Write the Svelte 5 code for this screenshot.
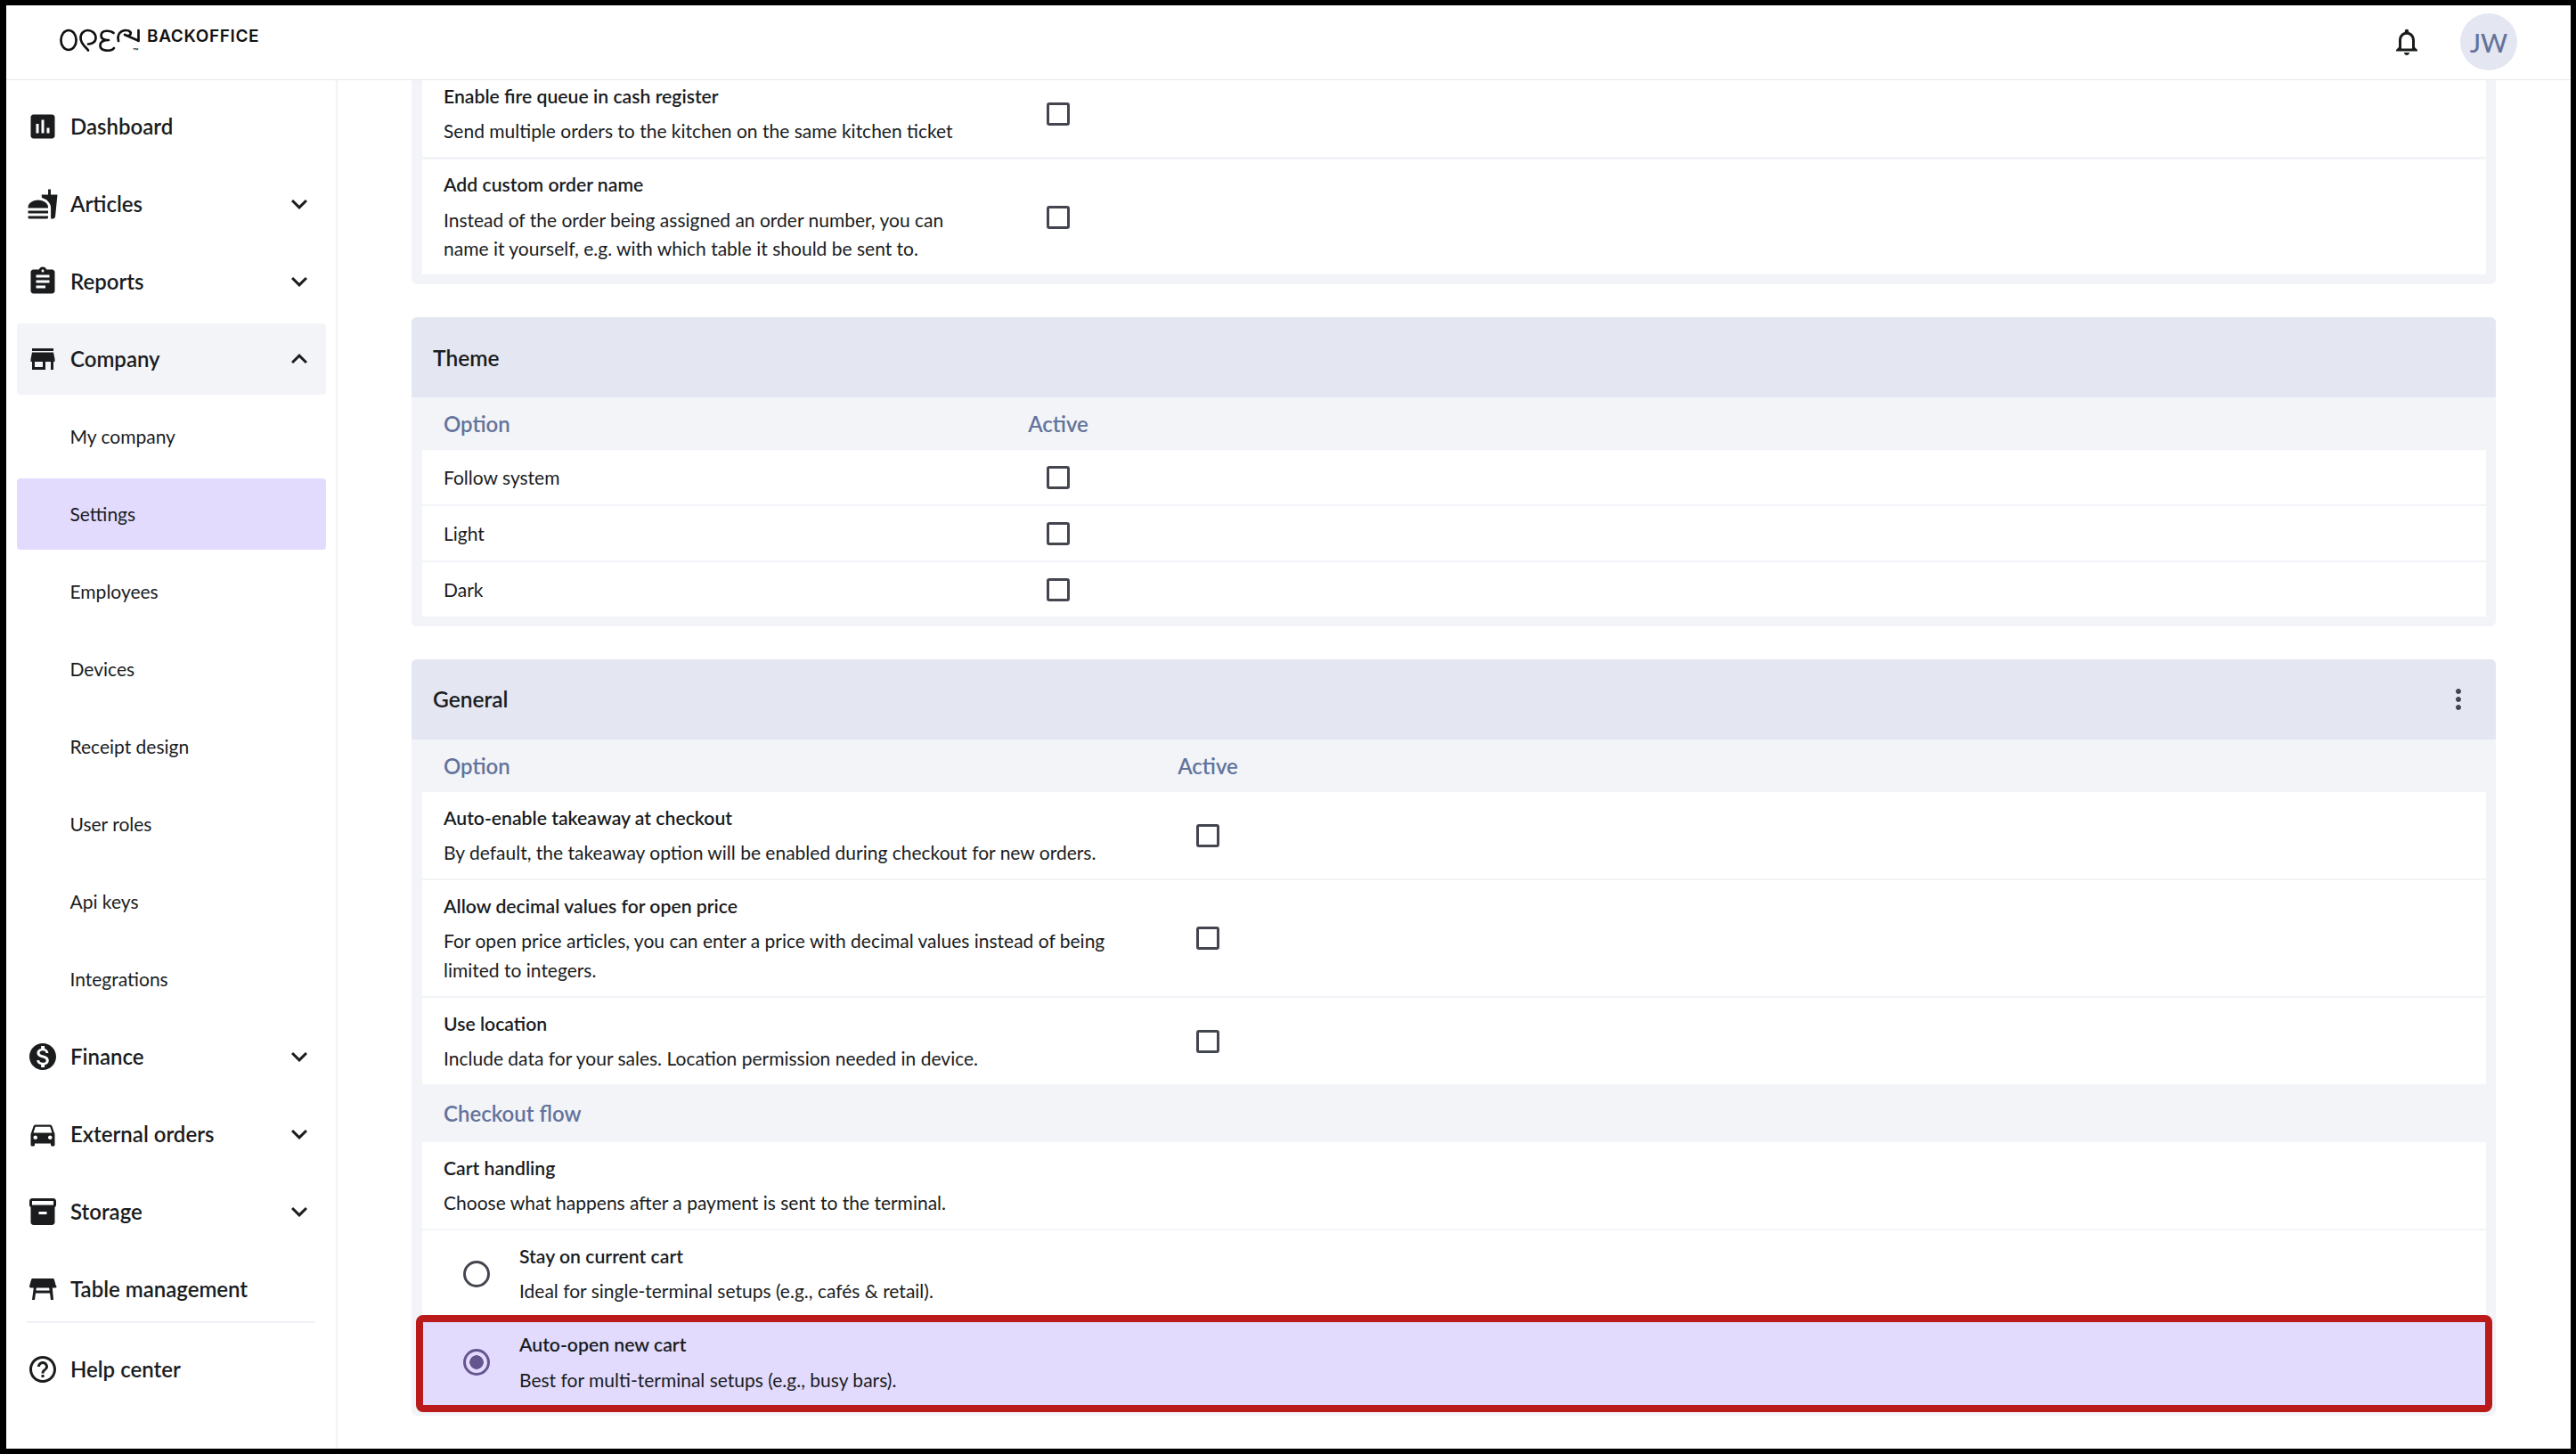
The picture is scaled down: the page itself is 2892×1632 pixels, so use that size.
<script>
  const I = {
    dash: 'M19 3H5c-1.1 0-2 .9-2 2v14c0 1.1.9 2 2 2h14c1.1 0 2-.9 2-2V5c0-1.1-.9-2-2-2zM9 17H7v-7h2v7zm4 0h-2V7h2v10zm4 0h-2v-4h2v4z',
    food: 'M18.06 22.99h1.66c.84 0 1.53-.64 1.63-1.46L23 5.05h-5V1h-1.97v4.05h-4.97l.3 2.34c1.71.47 3.31 1.32 4.27 2.26 1.44 1.42 2.43 2.89 2.43 5.29v8.05zM1 21.99V21h15.03v.99c0 .55-.45 1-1.01 1H2.01c-.56 0-1.01-.45-1.01-1zm15.03-7c.5-4-4.5-6-7.5-6s-8 2-7.5 6h15zM1.02 17h15v2h-15z',
    report: 'M19 3h-4.18C14.4 1.84 13.3 1 12 1c-1.3 0-2.4.84-2.82 2H5c-1.1 0-2 .9-2 2v14c0 1.1.9 2 2 2h14c1.1 0 2-.9 2-2V5c0-1.1-.9-2-2-2zm-7 0c.55 0 1 .45 1 1s-.45 1-1 1-1-.45-1-1 .45-1 1-1zm2 14H7v-2h7v2zm3-4H7v-2h10v2zm0-4H7V7h10v2z',
    store: 'M20 4H4v2h16V4zm1 10v-2l-1-5H4l-1 5v2h1v6h10v-6h4v6h2v-6h1zm-9 4H6v-4h6v4z',
    money: 'M12 2C6.48 2 2 6.48 2 12s4.48 10 10 10 10-4.48 10-10S17.52 2 12 2zm1.41 16.09V20h-2.67v-1.93c-1.71-.36-3.16-1.46-3.27-3.4h1.96c.1 1.05.82 1.87 2.65 1.87 1.96 0 2.4-.98 2.4-1.59 0-.83-.44-1.61-2.67-2.14-2.48-.6-4.18-1.62-4.18-3.67 0-1.72 1.39-2.84 3.11-3.21V4h2.67v1.95c1.86.45 2.79 1.86 2.85 3.39H14.3c-.05-1.11-.64-1.87-2.22-1.87-1.5 0-2.4.68-2.4 1.64 0 .84.65 1.39 2.67 1.91s4.18 1.39 4.18 3.91c-.01 1.83-1.38 2.83-3.12 3.16z',
    car: 'M18.92 6.01C18.72 5.42 18.16 5 17.5 5h-11c-.66 0-1.21.42-1.42 1.01L3 12v8c0 .55.45 1 1 1h1c.55 0 1-.45 1-1v-1h12v1c0 .55.45 1 1 1h1c.55 0 1-.45 1-1v-8l-2.08-5.99zM6.5 16c-.83 0-1.5-.67-1.5-1.5S5.67 13 6.5 13s1.5.67 1.5 1.5S7.33 16 6.5 16zm11 0c-.83 0-1.5-.67-1.5-1.5s.67-1.5 1.5-1.5 1.5.67 1.5 1.5-.67 1.5-1.5 1.5zM5 11l1.5-4.5h11L19 11H5z',
    box: 'M20 2H4c-1 0-2 .9-2 2v3.01c0 .72.43 1.34 1 1.69V20c0 1.1 1.1 2 2 2h14c.9 0 2-.9 2-2V8.7c.57-.35 1-.97 1-1.69V4c0-1.1-1-2-2-2zm-5 12H9v-2h6v2zm5-7H4V4h16v3z',
    table: 'M21.96 9.73l-1.43-5c-.12-.43-.51-.73-.96-.73H4.43c-.45 0-.84.3-.96.73l-1.43 5c-.18.63.3 1.27.96 1.27h2.2L4 20h2l.67-5h10.67l.66 5h2l-.77-9h2.2c.66 0 1.14-.64.96-1.27zM6.93 13l.27-2h9.6l.27 2H6.93z',
    help: 'M11 18h2v-2h-2v2zm1-16C6.48 2 2 6.48 2 12s4.48 10 10 10 10-4.48 10-10S17.52 2 12 2zm0 18c-4.41 0-8-3.59-8-8s3.59-8 8-8 8 3.59 8 8-3.59 8-8 8zm0-14c-2.21 0-4 1.79-4 4h2c0-1.1.9-2 2-2s2 .9 2 2c0 2-3 1.75-3 5h2c0-2.25 3-2.5 3-5 0-2.21-1.79-4-4-4z',
    down: 'M16.59 8.59L12 13.17 7.41 8.59 6 10l6 6 6-6z',
    up: 'M12 8l-6 6 1.41 1.41L12 10.83l4.59 4.58L18 14z',
    bell: 'M12 22c1.1 0 2-.9 2-2h-4c0 1.1.9 2 2 2zm6-6v-5c0-3.07-1.63-5.64-4.5-6.32V4c0-.83-.67-1.5-1.5-1.5s-1.5.67-1.5 1.5v.68C7.64 5.36 6 7.92 6 11v5l-2 2v1h16v-1l-2-2zm-2 1H8v-6c0-2.48 1.51-4.5 4-4.5s4 2.02 4 4.5v6z',
    more: 'M12 8c1.1 0 2-.9 2-2s-.9-2-2-2-2 .9-2 2 .9 2 2 2zm0 2c-1.1 0-2 .9-2 2s.9 2 2 2 2-.9 2-2-.9-2-2-2zm0 6c-1.1 0-2 .9-2 2s.9 2 2 2 2-.9 2-2-.9-2-2-2z'
  };
  const nav = [
    { label: 'Dashboard', icon: I.dash },
    { label: 'Articles', icon: I.food, chev: I.down },
    { label: 'Reports', icon: I.report, chev: I.down },
    { label: 'Company', icon: I.store, chev: I.up, open: true },
    { label: 'My company', sub: true },
    { label: 'Settings', sub: true, active: true },
    { label: 'Employees', sub: true },
    { label: 'Devices', sub: true },
    { label: 'Receipt design', sub: true },
    { label: 'User roles', sub: true },
    { label: 'Api keys', sub: true },
    { label: 'Integrations', sub: true },
    { label: 'Finance', icon: I.money, chev: I.down },
    { label: 'External orders', icon: I.car, chev: I.down },
    { label: 'Storage', icon: I.box, chev: I.down },
    { label: 'Table management', icon: I.table }
  ];
  const firstRows = [
    { title: 'Enable fire queue in cash register', desc: 'Send multiple orders to the kitchen on the same kitchen ticket' },
    { title: 'Add custom order name', desc: 'Instead of the order being assigned an order number, you can name it yourself, e.g. with which table it should be sent to.' }
  ];
  const themeRows = ['Follow system', 'Light', 'Dark'];
  const generalRows = [
    { title: 'Auto-enable takeaway at checkout', desc: 'By default, the takeaway option will be enabled during checkout for new orders.' },
    { title: 'Allow decimal values for open price', desc: 'For open price articles, you can enter a price with decimal values instead of being limited to integers.' },
    { title: 'Use location', desc: 'Include data for your sales. Location permission needed in device.' }
  ];
</script>

{#snippet icon(d, cls = 'ic')}
  <svg class={cls} viewBox="0 0 24 24" aria-hidden="true"><path {d} /></svg>
{/snippet}

{#snippet optionText(title, desc)}
  <div class="title">{title}</div>
  <div class="desc">{desc}</div>
{/snippet}

<div class="frame">
  <div class="app">
    <header class="top">
      <svg class="logo" viewBox="64 30 100 35" aria-label="Open logo">
        <g fill="none" stroke="#111" stroke-width="2.7" stroke-linecap="round" stroke-linejoin="round">
          <ellipse cx="77" cy="46" rx="8.6" ry="11" />
          <path d="M99 57.5C97 54 90.5 51 90.5 43.5C90.5 38 94.5 35 98.5 35C103 35 107.5 38 107.5 43.5C107.5 48 103.5 50.5 99 50.5" />
          <path d="M127.5 38C125 35.5 113.5 33.5 113.5 41C113.5 44.5 117 46 122 46C116 46 112.5 47.5 112.5 52C112.5 59 125 59 128 55" />
          <path d="M133 47C131 39 136 35 141 35C146 35 148 38 146 40C145 41.5 142 41 140 40L155 46.5" />
          <path d="M155.5 35V47" />
        </g>
        <text x="149" y="60" class="tm">™</text>
      </svg>
      <span class="brand">BACKOFFICE</span>
      <span class="spacer"></span>
      {@render icon(I.bell, 'ic bell')}
      <div class="avatar">JW</div>
    </header>

    <div class="body">
      <aside class="side">
        <nav class="nav">
          {#each nav as n}
            <div class="item" class:sub={n.sub} class:open={n.open} class:active={n.active}>
              {#if n.icon}{@render icon(n.icon)}{/if}
              <span class="lbl">{n.label}</span>
              {#if n.chev}{@render icon(n.chev, 'ic chev')}{/if}
            </div>
          {/each}
          <div class="divider"></div>
          <div class="item">
            {@render icon(I.help)}
            <span class="lbl">Help center</span>
          </div>
        </nav>
      </aside>

      <main class="main">
        <div class="scroll">
          <section class="card first">
            <div class="rows">
              {#each firstRows as r}
                <div class="row cols-a">
                  <div class="narrow">{@render optionText(r.title, r.desc)}</div>
                  <div class="cell"><span class="check"></span></div>
                </div>
              {/each}
            </div>
          </section>

          <section class="card">
            <div class="head">Theme</div>
            <div class="colhead cols-a"><span>Option</span><span class="center">Active</span></div>
            <div class="rows">
              {#each themeRows as t}
                <div class="row plain cols-a">
                  <div class="desc">{t}</div>
                  <div class="cell"><span class="check"></span></div>
                </div>
              {/each}
            </div>
          </section>

          <section class="card">
            <div class="head">
              <span>General</span>
              <svg class="ic more" viewBox="0 0 24 24" aria-hidden="true"><path d={I.more} /></svg>
            </div>
            <div class="colhead cols-b"><span>Option</span><span class="center">Active</span></div>
            <div class="rows">
              {#each generalRows as r}
                <div class="row cols-b">
                  <div>{@render optionText(r.title, r.desc)}</div>
                  <div class="cell"><span class="check"></span></div>
                </div>
              {/each}
            </div>
            <div class="band">Checkout flow</div>
            <div class="rows">
              <div class="row">
                {@render optionText('Cart handling', 'Choose what happens after a payment is sent to the terminal.')}
              </div>
              <div class="row radio-row">
                <span class="radio"></span>
                <div>{@render optionText('Stay on current cart', 'Ideal for single-terminal setups (e.g., cafés & retail).')}</div>
              </div>
              <div class="row radio-row selected">
                <span class="radio on"></span>
                <div>{@render optionText('Auto-open new cart', 'Best for multi-terminal setups (e.g., busy bars).')}</div>
              </div>
            </div>
          </section>
        </div>
      </main>
    </div>
  </div>
</div>

<style>
  :global(body) { margin: 0; background: #000; }
  .frame {
    width: 2892px; height: 1632px; box-sizing: border-box;
    padding: 6px 6px 6px 7px; background: #000;
    font-family: Lato, "Noto Sans", sans-serif; color: #1a1c1e;
  }
  .app { height: 100%; background: #fff; display: flex; flex-direction: column; overflow: hidden; }
  .top {
    flex: none; height: 82.5px; box-sizing: content-box;
    border-bottom: 1.5px solid #e8e9ee;
    display: flex; align-items: center; padding: 0 60px 0 57px;
  }
  .logo { width: 100px; height: 35px; flex: none; margin-top: -1px; }
  .tm { font: 700 7px "Liberation Sans", sans-serif; fill: #111; }
  .brand { font: 600 19px Inter, sans-serif; letter-spacing: .62px; margin-left: 1px; margin-top: -14px; color: #111; }
  .spacer { flex: 1; }
  .ic { width: 36px; height: 36px; flex: none; fill: #1a1c1e; }
  .bell { margin-right: 42px; }
  .avatar {
    width: 64px; height: 64px; border-radius: 50%; background: #e4e7f1; color: #64739b;
    display: flex; align-items: center; justify-content: center; font-size: 29px; font-weight: 500;
  }
  .body { flex: 1; display: flex; min-height: 0; }
  .side { flex: none; width: 372px; box-sizing: border-box; border-right: 2px solid #f2f4f8; padding: 12px 11px 0 12px; }
  .nav { display: flex; flex-direction: column; gap: 7px; }
  .item {
    height: 80px; display: flex; align-items: center; gap: 13px; padding: 0 12px 0 11px;
    border-radius: 4px; font-size: 24px; font-weight: 600;
  }
  .lbl { flex: 1; }
  .item.open { background: #f2f4f8; }
  .item.sub { padding-left: 59.5px; font-size: 21px; font-weight: 400; }
  .item.active { background: #e2dbfd; }
  .divider { height: 2px; background: #f0f1f7; margin: -11px 12px 5px 11px; }
  .main { flex: 1; min-width: 0; overflow: hidden; padding: 0 84px 0 83px; }
  .scroll { margin-top: -10px; display: flex; flex-direction: column; gap: 36.67px; }
  .card { background: #f2f4f8; border-radius: 6px; padding-bottom: 11.33px; }
  .head {
    height: 90px; background: #e4e7f1; border-radius: 6px 6px 0 0; padding: 0 24px;
    display: flex; align-items: center; justify-content: space-between;
    font-size: 24.5px; font-weight: 600;
  }
  .more { fill: #44464f; }
  .colhead {
    height: 59.33px; margin: 0 11px 0 12px; padding: 0 24px; align-items: center;
    color: #64739b; font-size: 24px; font-weight: 600;
  }
  .center { text-align: center; }
  .cols-a { display: grid; grid-template-columns: 622px 136px 1fr; }
  .cols-b { display: grid; grid-template-columns: 790px 136px 1fr; }
  .narrow { max-width: 590px; }
  .rows { display: flex; flex-direction: column; gap: 2.67px; margin: 0 11px 0 12px; }
  .row { background: #fff; padding: 12.67px 24px 12px; align-items: center; position: relative; }
  .row.plain { padding: 14.5px 24px 13.17px; }
  .title { font-size: 21.2px; font-weight: 600; line-height: 32.67px; margin-bottom: 6.67px; }
  .desc { font-size: 21px; font-weight: 400; line-height: 32.67px; }
  .cell { display: flex; justify-content: center; }
  .check { width: 26px; height: 26px; box-sizing: border-box; border: 3px solid #44464f; border-radius: 3px; }
  .band { height: 65px; margin-left: 36px; display: flex; align-items: center; color: #64739b; font-size: 24px; font-weight: 600; }
  .radio-row { display: flex; gap: 33px; padding-left: 46px; }
  .radio { width: 30px; height: 30px; box-sizing: border-box; border: 3px solid #44464f; border-radius: 50%; flex: none; }
  .radio.on { border-color: #65558f; background: radial-gradient(circle, #65558f 0 7.5px, transparent 8px); }
  .selected { background: #e2dbfd; }
  .selected::after {
    content: ''; position: absolute; top: -4.67px; left: -7px; right: -7px; bottom: -7.67px;
    border: 8px solid #ba1a1a; border-radius: 8px; pointer-events: none;
  }
</style>
